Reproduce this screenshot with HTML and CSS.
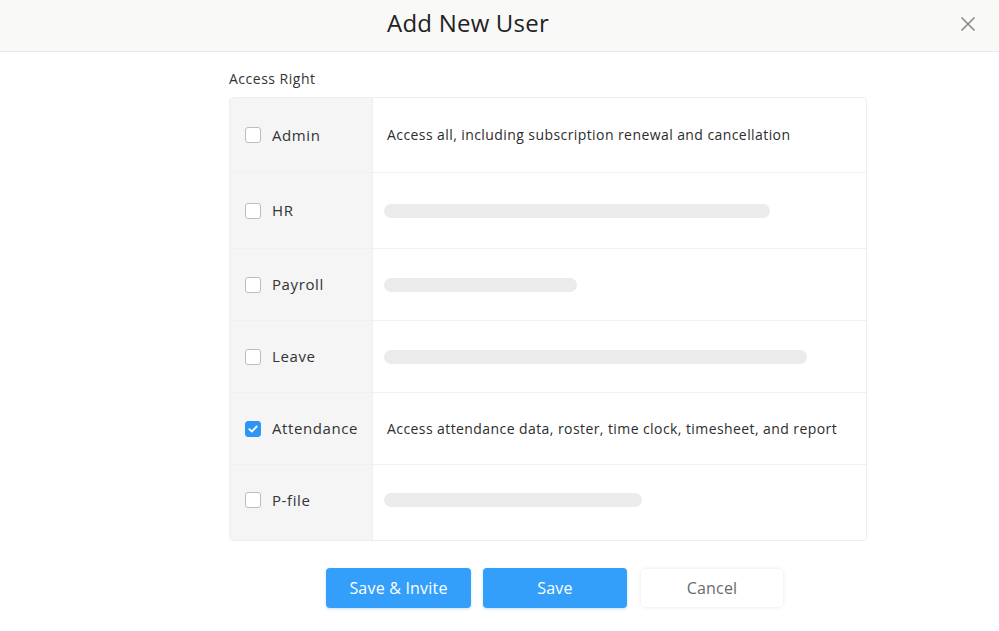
FILE: index.html
```html
<!DOCTYPE html>
<html>
<head>
<meta charset="utf-8">
<link rel="stylesheet" href="styles.css">
</head>
<body>
<div class="modal">
  <header class="header">
    <h1 class="title">Add New User</h1>
    <button class="close" aria-label="Close">
      <svg width="16" height="16" viewBox="0 0 16 16"><path d="M1.5 1.5 L14.5 14.5 M14.5 1.5 L1.5 14.5" stroke="#8a8a8a" stroke-width="1.6" fill="none"/></svg>
    </button>
  </header>
  <main class="content">
    <div class="label">Access Right</div>
    <div class="table">
      <div class="row r1">
        <div class="cell-left"><span class="cb"></span><span class="name">Admin</span></div>
        <div class="cell-right"><span class="desc">Access all, including subscription renewal and cancellation</span></div>
      </div>
      <div class="row r2">
        <div class="cell-left"><span class="cb"></span><span class="name">HR</span></div>
        <div class="cell-right"><span class="bar" style="width:386px"></span></div>
      </div>
      <div class="row r3">
        <div class="cell-left"><span class="cb"></span><span class="name">Payroll</span></div>
        <div class="cell-right"><span class="bar" style="width:193px"></span></div>
      </div>
      <div class="row r4">
        <div class="cell-left"><span class="cb"></span><span class="name">Leave</span></div>
        <div class="cell-right"><span class="bar" style="width:423px"></span></div>
      </div>
      <div class="row r5">
        <div class="cell-left"><span class="cb checked"><svg width="10" height="8" viewBox="0 0 10 8"><path d="M1.3 4.2 L3.8 6.5 L8.7 1.5" stroke="#fff" stroke-width="1.8" fill="none" stroke-linecap="round" stroke-linejoin="round"/></svg></span><span class="name">Attendance</span></div>
        <div class="cell-right"><span class="desc">Access attendance data, roster, time clock, timesheet, and report</span></div>
      </div>
      <div class="row r6">
        <div class="cell-left"><span class="cb"></span><span class="name">P-file</span></div>
        <div class="cell-right"><span class="bar" style="width:258px"></span></div>
      </div>
    </div>
    <div class="actions">
      <button class="btn primary">Save &amp; Invite</button>
      <button class="btn primary">Save</button>
      <button class="btn secondary">Cancel</button>
    </div>
  </main>
</div>
</body>
</html>
```
FILE: styles.css
```css
* { box-sizing: border-box; }
html, body { margin: 0; padding: 0; background: #fff; }
body {
  font-family: "Open Sans", "Liberation Sans", sans-serif;
  color: #2d2d2d;
  width: 999px;
  height: 631px;
  overflow: hidden;
}
.header {
  display: flex;
  align-items: center;
  height: 52px;
  background: #f9f9f8;
  border-bottom: 1px solid #e6eaed;
}
.title {
  flex: 1;
  margin: 0 0 6px 0;
  text-align: center;
  font-size: 24px;
  font-weight: 400;
  color: #222;
  letter-spacing: 0.2px;
}
.close {
  width: 63px;
  height: 51px;
  border: 0;
  background: transparent;
  padding: 0 0 4px 0;
  display: flex;
  align-items: center;
  justify-content: center;
}
.content {
  padding-left: 229px;
  width: 867px;
}
.label {
  margin-top: 17px;
  font-size: 14px;
  line-height: 20px;
  color: #333;
  height: 28px;
  letter-spacing: 0.5px;
}
.table {
  border: 1px solid #eceff2;
  border-radius: 4px;
  overflow: hidden;
  width: 638px;
}
.row {
  display: grid;
  grid-template-columns: 143px 1fr;
  border-bottom: 1px solid #eef1f4;
}
.row:last-child { border-bottom: 0; }
.r1 { height: 75px; }
.r2 { height: 76px; }
.r3 { height: 72px; }
.r4 { height: 72px; }
.r5 { height: 72px; }
.r6 { height: 75px; }
.r6 .cell-left, .r6 .cell-right { padding-bottom: 5px; }
.cell-left {
  background: #f5f5f5;
  border-right: 1px solid #eceff2;
  display: flex;
  align-items: center;
  padding-left: 15px;
}
.cell-right {
  display: flex;
  align-items: center;
  padding-left: 14px;
}
.cb {
  width: 16px;
  height: 16px;
  border: 1px solid #bdbdbd;
  border-radius: 3px;
  background: #fff;
  margin-right: 11px;
  display: inline-flex;
  align-items: center;
  justify-content: center;
  flex: none;
}
.cb.checked {
  background: #2d95f6;
  border-color: #2d95f6;
}
.name {
  font-size: 15px;
  color: #333;
  letter-spacing: 0.6px;
  margin-top: -1px;
}
.desc {
  font-size: 14px;
  color: #2d2d2d;
  letter-spacing: 0.42px;
  margin-top: -1px;
}
.bar {
  display: block;
  height: 14px;
  margin-left: -3px;
  border-radius: 7px;
  background: #ebebeb;
}
.actions {
  display: flex;
  gap: 12px;
  margin-top: 27px;
  padding-left: 97px;
}
.btn {
  height: 40px;
  width: 145px;
  border-radius: 4px;
  font-family: inherit;
  font-size: 16px;
  border: 0;
  letter-spacing: 0.2px;
}
.btn + .btn { width: 144px; }
.primary {
  background: #339ffa;
  color: #fff;
  box-shadow: 0 1px 3px rgba(30, 120, 220, 0.25);
}
.secondary {
  margin-left: 2px;
  height: 38px;
  margin-top: 1px;
  background: #fff;
  color: #6a6a6a;
  box-shadow: 0 0 4px rgba(0, 0, 0, 0.1);
}
.btn.secondary { width: 142px; }
```
